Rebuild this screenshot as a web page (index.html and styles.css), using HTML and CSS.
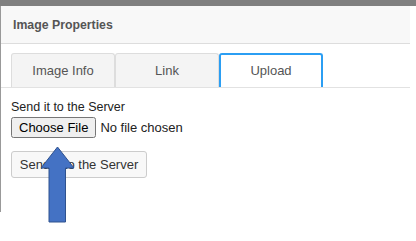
FILE: index.html
```html
<!DOCTYPE html>
<html lang="en">
<head>
    <meta charset="UTF-8">
    <title>Image Properties</title>
    <link rel="stylesheet" href="styles.css">
</head>
<body>
    <div class="topbar"></div>
    <div class="dialog">
        <div class="dialog-title">Image Properties</div>
        <div class="tabs">
            <a class="tab" href="#">Image Info</a>
            <a class="tab" href="#">Link</a>
            <a class="tab active" href="#">Upload</a>
        </div>
        <div class="panel">
            <label class="field-label" for="upload">Send it to the Server</label>
            <input type="file" id="upload" class="file-input">
            <button class="send-btn" type="button">Send it to the Server</button>
        </div>
    </div>
    <svg class="pointer" width="36" height="78" viewBox="0 0 36 78">
        <polygon points="17.5,1 34,22 25.5,22 25.5,76 9,76 9,22 1,22" fill="#4472c4" stroke="#2f528f" stroke-width="1"/>
    </svg>
</body>
</html>
```

FILE: styles.css
```css
body {
    margin: 0;
    padding: 0;
    font-family: "Liberation Sans", Arial, sans-serif;
    background: #fff;
    color: #222;
}
.topbar {
    height: 6px;
    background-color: #808080;
}
.dialog {
    width: 409px;
    height: 206px;
    border-left: 1px solid #999;
}
.dialog-title {
    height: 37px;
    line-height: 39px;
    padding-left: 12px;
    background-color: #f8f8f8;
    border-bottom: 1px solid #ddd;
    font-size: 12.3px;
    font-weight: bold;
    color: #555;
    overflow: hidden;
}
.tabs {
    display: flex;
    margin-top: 9px;
    padding-left: 10px;
    border-bottom: 1px solid #e2e2e2;
}
.tab {
    width: 102px;
    height: 33px;
    line-height: 34px;
    text-align: center;
    text-decoration: none;
    font-size: 13px;
    color: #555;
    background-color: #f4f4f4;
    border: 1px solid #ddd;
    border-bottom: none;
    border-radius: 3px 3px 0 0;
}
.tab.active {
    width: 100px;
    height: 32px;
    line-height: 32px;
    margin-bottom: -1px;
    background-color: #fff;
    border: 2px solid #2b9ef3;
    border-bottom: none;
}
.panel {
    display: flex;
    flex-direction: column;
    align-items: flex-start;
    padding: 12px 0 0 10px;
}
.field-label {
    font-size: 12.5px;
    line-height: 15px;
    color: #222;
}
.file-input {
    margin: 2px 0 0 0;
    font-family: "Liberation Sans", Arial, sans-serif;
    font-size: 13px;
}
.send-btn {
    margin-top: 13px;
    width: 136px;
    height: 27px;
    padding: 0;
    font-family: "Liberation Sans", Arial, sans-serif;
    font-size: 13px;
    color: #333;
    background-color: #f8f8f8;
    border: 1px solid #ccc;
    border-radius: 3px;
}
.pointer {
    position: absolute;
    left: 40px;
    top: 146px;
}
```
